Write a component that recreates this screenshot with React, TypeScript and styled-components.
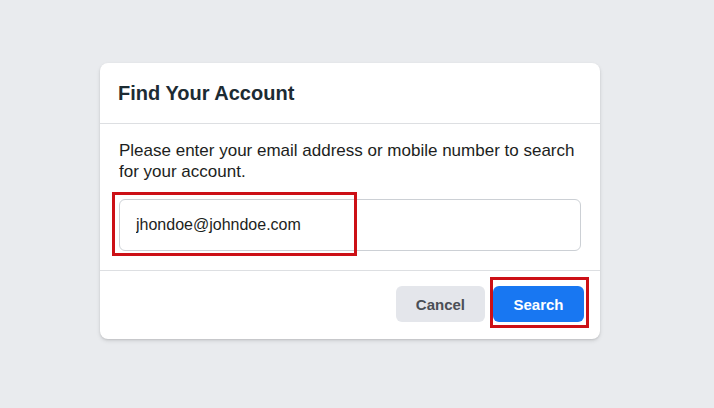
import React, { ReactElement } from 'react';
import styled, { createGlobalStyle } from 'styled-components';

const GlobalStyle = createGlobalStyle`
  html, body {
    margin: 0;
    padding: 0;
    background-color: #e9ebee;
    font-family: 'Liberation Sans', Arial, Helvetica, sans-serif;
  }
  * {
    box-sizing: border-box;
  }
`;

const App = (): ReactElement => {
  return (
    <React.Fragment>
      <GlobalStyle />
      <Page>
        <Card>
          <Header>
            <h2>Find Your Account</h2>
          </Header>
          <Body>
            <p>
              Please enter your email address or mobile number to search for
              your account.
            </p>
            <InputWrap>
              <Input type="text" defaultValue="jhondoe@johndoe.com" />
              <Highlight $top={-7} $left={-7} $width={245} $height={64} />
            </InputWrap>
          </Body>
          <Footer>
            <Button $variant="secondary">Cancel</Button>
            <ButtonWrap>
              <Button $variant="primary">Search</Button>
              <Highlight $top={-9} $left={-3} $width={99} $height={51} />
            </ButtonWrap>
          </Footer>
        </Card>
      </Page>
    </React.Fragment>
  );
};

export const Page = styled.div`
  width: 100%;
  min-height: 408px;
  padding: 63px 0 0 100px;
`;

export const Card = styled.div`
  width: 500px;
  background-color: #fff;
  border-radius: 8px;
  box-shadow: 0 1px 2px rgba(0, 0, 0, 0.1), 0 2px 4px rgba(0, 0, 0, 0.1);
`;

export const Header = styled.div`
  height: 61px;
  padding: 0 18px;
  display: flex;
  align-items: center;
  border-bottom: 1px solid #dddfe2;
  & > h2 {
    margin: 0;
    font-size: 20px;
    font-weight: 700;
    color: #1c2b33;
    margin-top: 1px;
  }
`;

export const Body = styled.div`
  padding: 16px 19px 19px 19px;
  border-bottom: 1px solid #dddfe2;
  & > p {
    margin: 0 0 17px 0;
    font-size: 17px;
    line-height: 21px;
    color: #1c1e21;
  }
`;

export const InputWrap = styled.div`
  position: relative;
`;

export const Input = styled.input`
  display: block;
  width: 100%;
  height: 52px;
  padding: 0 16px;
  border: 1px solid #ccd0d5;
  border-radius: 6px;
  font-family: 'Liberation Sans', Arial, sans-serif;
  font-size: 16px;
  color: #1c1e21;
  background-color: #fff;
  outline: none;
`;

export const Highlight = styled.div<{
  $top: number;
  $left: number;
  $width: number;
  $height: number;
}>`
  position: absolute;
  top: ${({ $top }) => `${$top}px`};
  left: ${({ $left }) => `${$left}px`};
  width: ${({ $width }) => `${$width}px`};
  height: ${({ $height }) => `${$height}px`};
  border: 3px solid #cc1016;
  pointer-events: none;
`;

export const Footer = styled.div`
  padding: 15px 16px 17px 16px;
  display: flex;
  justify-content: flex-end;
  gap: 8px;
`;

export const ButtonWrap = styled.div`
  position: relative;
`;

export const Button = styled.button<{ $variant: 'primary' | 'secondary' }>`
  height: 36px;
  padding: 0 20px;
  border: none;
  border-radius: 6px;
  font-family: 'Liberation Sans', Arial, sans-serif;
  font-size: 15px;
  font-weight: 700;
  cursor: pointer;
  background-color: ${({ $variant }) =>
    $variant === 'primary' ? '#1877f2' : '#e4e6eb'};
  color: ${({ $variant }) => ($variant === 'primary' ? '#fff' : '#4b4f56')};
  min-width: ${({ $variant }) => ($variant === 'primary' ? '91px' : '89px')};
`;

export default App;
